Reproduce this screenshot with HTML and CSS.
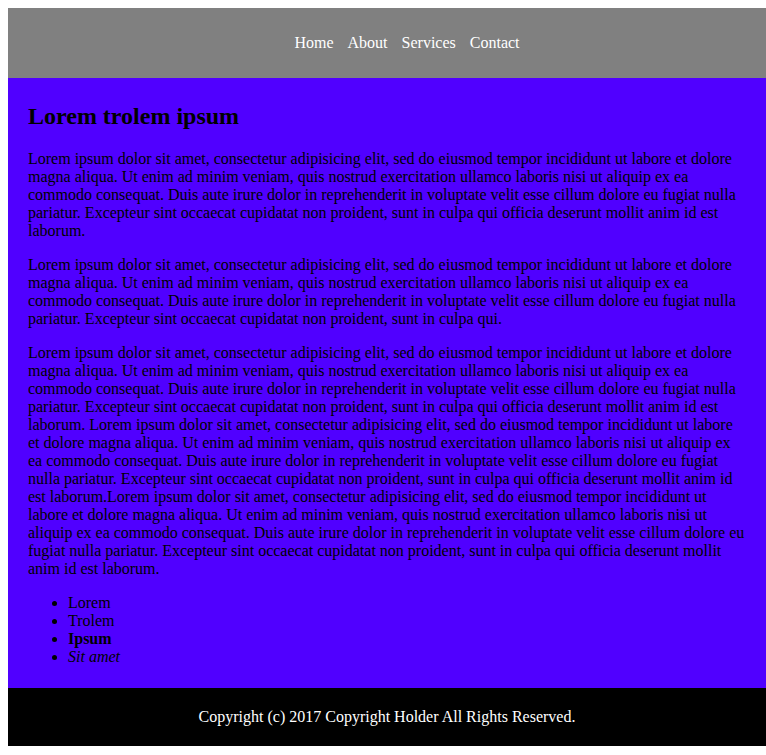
FILE: index.html
```html
<!DOCTYPE html>
<html>
<head>
<meta charset="utf-8">
<title>Lorem trolem ipsum</title>
<link rel="stylesheet" href="styles.css">
</head>
<body>
<header class="site-header">
  <nav>
    <ul class="nav-list">
      <li><a href="#">Home</a></li>
      <li><a href="#">About</a></li>
      <li><a href="#">Services</a></li>
      <li><a href="#">Contact</a></li>
    </ul>
  </nav>
</header>
<main class="content">
  <h2 class="title">Lorem trolem ipsum</h2>
  <p>Lorem ipsum dolor sit amet, consectetur adipisicing elit, sed do eiusmod tempor incididunt ut labore et dolore magna aliqua. Ut enim ad minim veniam, quis nostrud exercitation ullamco laboris nisi ut aliquip ex ea commodo consequat. Duis aute irure dolor in reprehenderit in voluptate velit esse cillum dolore eu fugiat nulla pariatur. Excepteur sint occaecat cupidatat non proident, sunt in culpa qui officia deserunt mollit anim id est laborum.</p>
  <p>Lorem ipsum dolor sit amet, consectetur adipisicing elit, sed do eiusmod tempor incididunt ut labore et dolore magna aliqua. Ut enim ad minim veniam, quis nostrud exercitation ullamco laboris nisi ut aliquip ex ea commodo consequat. Duis aute irure dolor in reprehenderit in voluptate velit esse cillum dolore eu fugiat nulla pariatur. Excepteur sint occaecat cupidatat non proident, sunt in culpa qui.</p>
  <p>Lorem ipsum dolor sit amet, consectetur adipisicing elit, sed do eiusmod tempor incididunt ut labore et dolore magna aliqua. Ut enim ad minim veniam, quis nostrud exercitation ullamco laboris nisi ut aliquip ex ea commodo consequat. Duis aute irure dolor in reprehenderit in voluptate velit esse cillum dolore eu fugiat nulla pariatur. Excepteur sint occaecat cupidatat non proident, sunt in culpa qui officia deserunt mollit anim id est laborum. Lorem ipsum dolor sit amet, consectetur adipisicing elit, sed do eiusmod tempor incididunt ut labore et dolore magna aliqua. Ut enim ad minim veniam, quis nostrud exercitation ullamco laboris nisi ut aliquip ex ea commodo consequat. Duis aute irure dolor in reprehenderit in voluptate velit esse cillum dolore eu fugiat nulla pariatur. Excepteur sint occaecat cupidatat non proident, sunt in culpa qui officia deserunt mollit anim id est laborum.Lorem ipsum dolor sit amet, consectetur adipisicing elit, sed do eiusmod tempor incididunt ut labore et dolore magna aliqua. Ut enim ad minim veniam, quis nostrud exercitation ullamco laboris nisi ut aliquip ex ea commodo consequat. Duis aute irure dolor in reprehenderit in voluptate velit esse cillum dolore eu fugiat nulla pariatur. Excepteur sint occaecat cupidatat non proident, sunt in culpa qui officia deserunt mollit anim id est laborum.</p>
  <ul class="items">
    <li>Lorem</li>
    <li>Trolem</li>
    <li><strong>Ipsum</strong></li>
    <li><em>Sit amet</em></li>
  </ul>
</main>
<footer class="site-footer">
  <p class="copyright">Copyright (c) 2017 Copyright Holder All Rights Reserved.</p>
</footer>
</body>
</html>
```

FILE: styles.css
```css
html {
  background: #ffffff;
}

body {
  margin: 8px 0 8px 8px;
  font-family: "Liberation Serif", "Times New Roman", serif;
  font-size: 16px;
  color: #000000;
}

.site-header {
  background: #808080;
  height: 70px;
  display: flex;
  align-items: center;
  justify-content: center;
}

.nav-list {
  list-style: none;
  margin: 0;
  padding: 0 0 0 40px;
  display: flex;
  gap: 14px;
}

.nav-list a {
  color: #ffffff;
  text-decoration: none;
}

.content {
  background: #5000ff;
  padding: 5px 20px 6px;
  overflow: hidden;
}

.title {
  font-size: 24px;
  font-weight: bold;
  margin: 20px 0;
}

.content p {
  margin: 16px 0;
}

.items {
  margin: 16px 0;
  padding-left: 40px;
}

.site-footer {
  background: #000000;
  color: #ffffff;
  text-align: center;
  padding: 20px 0;
}

.copyright {
  margin: 0;
}
```
